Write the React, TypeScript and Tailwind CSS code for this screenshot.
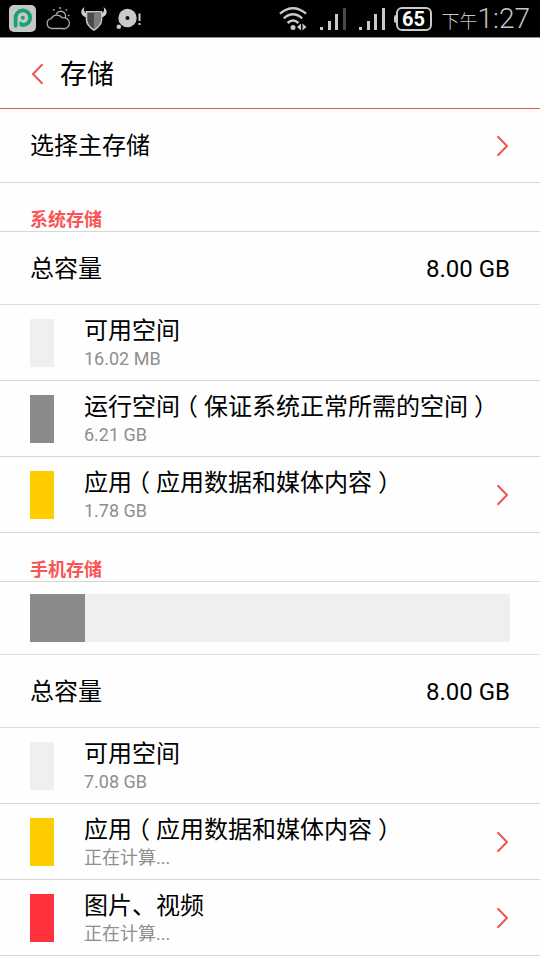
import { Fragment } from "react";
import clsx from "clsx";

interface StorageEntry {
  title: string;
  detail: string;
  color: string;
  link?: boolean;
}

const systemEntries: StorageEntry[] = [
  { title: "可用空间", detail: "16.02 MB", color: "bg-[#efefef]" },
  { title: "运行空间（保证系统正常所需的空间）", detail: "6.21 GB", color: "bg-[#8a8a8a]" },
  { title: "应用（应用数据和媒体内容）", detail: "1.78 GB", color: "bg-[#ffcc00]", link: true },
];

const phoneEntries: StorageEntry[] = [
  { title: "可用空间", detail: "7.08 GB", color: "bg-[#efefef]" },
  { title: "应用（应用数据和媒体内容）", detail: "正在计算...", color: "bg-[#ffcc00]", link: true },
  { title: "图片、视频", detail: "正在计算...", color: "bg-[#ff333d]", link: true },
];

const Chevron = ({ left = false }: { left?: boolean }) => (
  <svg viewBox="0 0 14 22" className={clsx("h-[22px] w-[14px] shrink-0", left && "rotate-180")} fill="none" stroke="#ee5555" strokeWidth="2" aria-hidden="true">
    <path d="M1.5 1.2 L11 11 L1.5 20.8" />
  </svg>
);

const Signal = ({ weak = false }: { weak?: boolean }) => (
  <svg viewBox="0 0 27 24" className="h-6 w-[27px]" fill="#c9c9c9" aria-hidden="true">
    <rect x="0" y="20" width="3" height="3" />
    <rect x="8" y="14" width="3" height="9" />
    <rect x="15" y="7" width="3" height="16" />
    <rect x="23" y="1" width="3" height="22" fill={weak ? "#4b4b4b" : "#c9c9c9"} />
  </svg>
);

const StatusBar = () => (
  <div className="flex h-[38px] items-center justify-between border-b border-[#8c8c8c] bg-black pl-[9px] pr-[10px] text-[#c4c4c4]">
    <div className="flex items-center gap-2">
      <svg viewBox="0 0 27 27" className="mr-[2px] h-[27px] w-[27px]" aria-hidden="true">
        <rect width="27" height="27" rx="5" fill="#c6c8c7" />
        <path d="M6.6 20.8 V13 A7.3 7.3 0 1 1 13.9 20" fill="none" stroke="#16a271" strokeWidth="3.8" strokeLinecap="round" />
        <path d="M11.9 20 V18" fill="none" stroke="#16a271" strokeWidth="3" strokeLinecap="round" />
        <circle cx="13.8" cy="12.8" r="2" fill="#16a271" />
      </svg>
      <svg viewBox="0 0 26 24" className="h-6 w-[26px]" fill="none" stroke="#a8a8a8" strokeWidth="1.3" strokeLinecap="round" aria-hidden="true">
        <path d="M6 21.5 A5 5 0 0 1 5.2 11.6 A6.4 6.4 0 0 1 16.2 11 A5.5 5.5 0 1 1 16.5 21.5 Z" />
        <path d="M10.3 7.2 A4.8 4.8 0 1 1 19.2 11" />
        <path d="M14.2 0.8 V1.2 M7.8 2.8 L8 3 M20.5 2.8 L20.3 3 M22.6 8.5 H22.8" strokeWidth="1.7" />
      </svg>
      <svg viewBox="0 0 28 26" className="h-[26px] w-7" aria-hidden="true">
        <path d="M4.5 1 C0 4 0 9.5 6 11.2 V7 C3.8 6 3.4 3.6 4.5 1 Z M23.5 1 C28 4 28 9.5 22 11.2 V7 C24.2 6 24.6 3.6 23.5 1 Z" fill="#c8d2d2" />
        <path d="M6.5 5.8 H21.5 V14 C21.5 18.5 18 21.5 14 24.2 C10 21.5 6.5 18.5 6.5 14 Z" fill="#4a4a4a" stroke="#c8c8c8" strokeWidth="1.6" />
        <path d="M14 6.6 H20.7 V14 C20.7 17.8 17.5 20.7 14 23.2 Z" fill="#7c7c7c" />
      </svg>
      <svg viewBox="0 0 26 24" className="h-6 w-[26px]" fill="#cacaca" aria-hidden="true">
        <circle cx="11.5" cy="11" r="9.2" />
        <circle cx="11.5" cy="11" r="2" fill="#111111" />
        <circle cx="2.8" cy="19.8" r="2.3" />
        <path d="M22.5 6.5 H24.5 V14 H22.5 Z M22.5 16 H24.5 V18 H22.5 Z" />
      </svg>
    </div>
    <div className="flex items-center">
      <svg viewBox="0 0 29 26" className="mr-3 h-[26px] w-[29px]" fill="none" stroke="#c9c9c9" strokeWidth="2.4" aria-hidden="true">
        <path d="M1 7.6 Q14 -3.2 27 7.6" />
        <path d="M4.8 12.4 Q14 4.2 23.2 12.4" />
        <path d="M8.6 17 Q14 12 19.4 17" />
        <circle cx="14" cy="21.5" r="2.5" fill="#c9c9c9" stroke="none" />
        <path d="M18 21 L22 17.5 V24.5 Z M27.5 21 L23.5 17.5 V24.5 Z" fill="#c9c9c9" stroke="none" />
      </svg>
      <div className="mr-2 flex gap-3">
        <Signal weak />
        <Signal />
      </div>
      <div className="mr-[10px] flex items-center">
        <span className="h-2 w-[2px] rounded-l-sm bg-[#c9c9c9]" />
        <span className="flex h-6 w-9 items-center justify-center rounded-md border-2 border-[#c9c9c9] text-[20px] font-bold leading-none text-white">65</span>
      </div>
      <span className="flex items-baseline pt-1 font-light leading-8">
        <span className="text-[18px]">下午</span>
        <span className="text-[28px]">1:27</span>
      </span>
    </div>
  </div>
);

// Half-width bracket glyphs, each centred in a full-width cell
const Title = ({ text }: { text: string }) => (
  <>
    {text.split(/([（）])/).map((part, i) =>
      part === "（" || part === "）" ? (
        <span key={i} className="inline-block w-6 text-center [font-feature-settings:'halt']">{part}</span>
      ) : (
        <Fragment key={i}>{part}</Fragment>
      )
    )}
  </>
);

const SectionTitle = ({ children }: { children: string }) => (
  <h2 className="flex h-[49px] items-end border-b border-[#d6d6d6] px-[30px] text-[18px] font-bold leading-[22px] text-[#fa5555]">{children}</h2>
);

const Capacity = ({ value }: { value: string }) => (
  <div className="flex h-[73px] items-center justify-between border-b border-[#dedede] px-[30px] pt-[2px] text-[24px]">
    <span>总容量</span>
    <span>{value}</span>
  </div>
);

const EntryRow = ({ entry }: { entry: StorageEntry }) => {
  const Row = entry.link ? "button" : "div";
  return (
    <Row className="flex h-[76px] w-full items-center border-b border-[#d6d6d6] px-[30px] text-left">
      <span className={clsx("mr-[30px] h-12 w-6 shrink-0", entry.color)} />
      <span className="flex min-w-0 flex-1 flex-col whitespace-nowrap">
        <span className="text-[24px] leading-8"><Title text={entry.title} /></span>
        <span className="text-[18px] leading-6 text-[#8e8e8e]">{entry.detail}</span>
      </span>
      {entry.link && <Chevron />}
    </Row>
  );
};

const App = () => (
  <div className="min-h-screen bg-[#fefefe] font-[Roboto,'Noto_Sans_CJK_SC',sans-serif] text-black" lang="zh-CN">
    <StatusBar />
    <header className="flex h-[71px] items-center gap-4 border-b border-[#e45858] px-[30px] pt-[2px]">
      <button aria-label="返回" className="flex">
        <Chevron left />
      </button>
      <h1 className="pt-[2px] text-[27px] leading-9">存储</h1>
    </header>
    <main>
      <button className="flex h-[74px] w-full items-center justify-between border-b border-[#d6d6d6] px-[30px] text-left text-[24px]">
        选择主存储
        <Chevron />
      </button>

      <section>
        <SectionTitle>系统存储</SectionTitle>
        <Capacity value="8.00 GB" />
        {systemEntries.map((entry) => (
          <EntryRow key={entry.title} entry={entry} />
        ))}
      </section>

      <section>
        <SectionTitle>手机存储</SectionTitle>
        <div className="flex h-[73px] items-center border-b border-[#e2e2e2] px-[30px]">
          <div className="h-12 w-full bg-[#efefef]">
            <div className="h-full bg-[#8a8a8a]" style={{ width: `${((8 - 7.08) / 8) * 100}%` }} />
          </div>
        </div>
        <Capacity value="8.00 GB" />
        {phoneEntries.map((entry) => (
          <EntryRow key={entry.title} entry={entry} />
        ))}
      </section>
    </main>
  </div>
);

export default App;
